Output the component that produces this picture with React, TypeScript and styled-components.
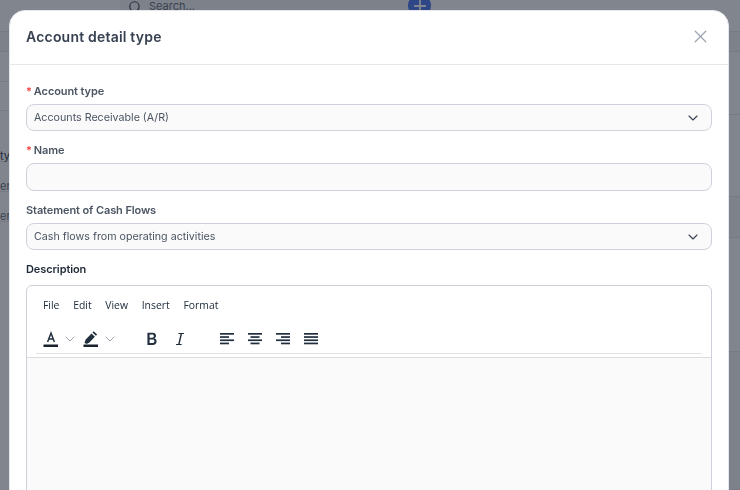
import React from 'react';
import styled, { createGlobalStyle } from 'styled-components';
import { ChevronDown, Plus, Search, X } from 'lucide-react';

const GlobalStyle = createGlobalStyle`
  html, body {
    margin: 0;
    padding: 0;
    width: 740px;
    height: 490px;
    overflow: hidden;
    font-family: Inter, 'Liberation Sans', sans-serif;
  }
`;

export default function App() {
  return (
    <>
      <GlobalStyle />
      <Page>
        <TopBar>
          <SearchBox>
            <Search size={14} color="#3f4652" />
            <span>Search...</span>
          </SearchBox>
          <AddButton>
            <Plus size={18} color="#fff" strokeWidth={2.5} />
          </AddButton>
        </TopBar>
        <Columns>
          <Column>
            <Row h={20} shade />
            <Row h={30} />
            <Row h={29} />
            <Row h={51}>ty</Row>
            <Row h={30} light>
              en
            </Row>
            <Row h={30} light>
              er
            </Row>
          </Column>
          <Column>
            <Row h={20} shade />
            <Row h={63} />
            <Row h={82} />
            <Row h={41} shade />
            <Row h={114} />
            <Row h={138} shade />
          </Column>
        </Columns>
      </Page>
      <Overlay />
      <Modal>
        <Header>
          <Title>Account detail type</Title>
          <Close>
            <X size={21} strokeWidth={1.5} />
          </Close>
        </Header>
        <Body>
          <Field>
            <Label>
              <Star>*</Star>Account type
            </Label>
            <SelectBox>
              Accounts Receivable (A/R)
              <ChevronDown size={16} strokeWidth={1.6} color="#374151" />
            </SelectBox>
          </Field>
          <Field>
            <Label>
              <Star>*</Star>Name
            </Label>
            <InputBox />
          </Field>
          <Field>
            <Label>Statement of Cash Flows</Label>
            <SelectBox>
              Cash flows from operating activities
              <ChevronDown size={16} strokeWidth={1.6} color="#374151" />
            </SelectBox>
          </Field>
          <Field>
            <Label dark>Description</Label>
            <Editor>
              <EditorHead>
                <MenuBar>
                  <MenuItem>File</MenuItem>
                  <MenuItem>Edit</MenuItem>
                  <MenuItem>View</MenuItem>
                  <MenuItem>Insert</MenuItem>
                  <MenuItem>Format</MenuItem>
                </MenuBar>
                <ToolBar>
                  <ToolGroup>
                    <ToolButton>
                      <svg width="16" height="18" viewBox="0 0 16 18">
                        <path d="M4.600 12 8 3l3.400 9M5.800 9h4.400" fill="none" stroke="#222f3e" strokeWidth="1.500" />
                        <rect x="0.500" y="14.500" width="14.500" height="2.500" fill="#18202b" />
                      </svg>
                    </ToolButton>
                    <Caret />
                    <ToolButton>
                      <svg width="16" height="18" viewBox="0 0 16 18">
                        <path d="M1.500 13l1-3.200 6-6.300 3.400 3.200-6 6.300-1.200.2-.6.700-2.600-.9zM9.500 2.500l1.200-1.200 3.400 3.200-1.200 1.200z" fill="#222f3e" />
                        <rect x="0.500" y="14.500" width="14.500" height="2.500" fill="#18202b" />
                      </svg>
                    </ToolButton>
                    <Caret />
                  </ToolGroup>
                  <ToolGroup gap={13} offset={21}>
                    <ToolButton>
                      <svg width="16" height="16" viewBox="0 0 14 14">
                        <path d="M3 1.500h4.600c1.700 0 2.900 1 2.900 2.600 0 1.100-.6 1.900-1.600 2.300 1.300.3 2.100 1.300 2.100 2.700 0 1.900-1.400 3.100-3.300 3.100H3zM4.900 3.100v2.700h2.300c.9 0 1.400-.5 1.400-1.350S8.100 3.100 7.200 3.100zm0 4.300v3.200h2.600c1 0 1.600-.6 1.600-1.600s-.6-1.600-1.600-1.600z" fill="#222f3e" />
                      </svg>
                    </ToolButton>
                    <ToolButton>
                      <svg width="14" height="14" viewBox="0 0 14 14">
                        <path d="M5.500 1h5.500v1H9L6.700 12h2v1H3v-1h2.200L7.500 2H5.300z" fill="#222f3e" />
                      </svg>
                    </ToolButton>
                  </ToolGroup>
                  <ToolGroup gap={14} offset={33}>
                    <AlignIcon lines={[[0, 14], [0, 9], [0, 14], [0, 9]]} />
                    <AlignIcon lines={[[0, 14], [2.500, 9], [0, 14], [2.500, 9]]} />
                    <AlignIcon lines={[[0, 14], [5, 9], [0, 14], [5, 9]]} />
                    <AlignIcon lines={[[0, 14], [0, 14], [0, 14], [0, 14]]} />
                  </ToolGroup>
                </ToolBar>
              </EditorHead>
              <EditArea />
            </Editor>
          </Field>
        </Body>
      </Modal>
    </>
  );
}

function AlignIcon({ lines }: { lines: number[][] }) {
  return (
    <ToolButton>
      <svg width="14" height="14" viewBox="0 0 14 14">
        {lines.map(([x, w], i) => (
          <rect key={i} x={x} y={1 + i * 3.200} width={w} height="1.700" fill="#222f3e" />
        ))}
      </svg>
    </ToolButton>
  );
}

function Caret() {
  return (
    <CaretWrap>
      <ChevronDown size={16} strokeWidth={1.300} color="#8d94a0" />
    </CaretWrap>
  );
}

const Page = styled.div`
  width: 740px;
  height: 490px;
  background: #fff;
  overflow: hidden;
`;

const TopBar = styled.div`
  height: 32px;
  display: flex;
  border-bottom: 1px solid #e5e7eb;
  box-sizing: border-box;
`;

const SearchBox = styled.div`
  width: 288px;
  height: 13px;
  margin-left: 120px;
  padding-left: 8px;
  box-sizing: border-box;
  background: #f6f6f8;
  display: flex;
  align-items: flex-end;
  gap: 7px;
  color: #6b7280;
  font-size: 11px;
  svg {
    margin-bottom: -1px;
  }
`;

const AddButton = styled.div`
  width: 23px;
  height: 23px;
  margin-top: -6px;
  border-radius: 50%;
  background: #4f7cf0;
  display: flex;
  align-items: center;
  justify-content: center;
`;

const Columns = styled.div`
  display: flex;
  justify-content: space-between;
`;

const Column = styled.div`
  width: 40px;
  display: flex;
  flex-direction: column;
`;

const Row = styled.div<{ h: number; shade?: boolean; light?: boolean }>`
  height: ${(p) => p.h}px;
  box-sizing: border-box;
  border-bottom: 1px solid #e5e7eb;
  background: ${(p) => (p.shade ? '#f5f6f8' : '#fff')};
  display: flex;
  align-items: flex-end;
  font-size: 11px;
  line-height: 10px;
  color: ${(p) => (p.light ? '#6b7280' : '#374151')};
`;

const Overlay = styled.div`
  position: fixed;
  inset: 0;
  background: rgba(17, 24, 39, 0.53);
`;

const Modal = styled.div`
  position: fixed;
  left: 9px;
  top: 10px;
  width: 720px;
  height: 520px;
  box-sizing: border-box;
  background: #fff;
  border: 1px solid #e5e7eb;
  border-radius: 16px;
  overflow: hidden;
`;

const Header = styled.div`
  height: 54px;
  box-sizing: border-box;
  padding: 0 17px 2px 16px;
  border-bottom: 1px solid #e5e7eb;
  display: flex;
  align-items: center;
  justify-content: space-between;
`;

const Title = styled.div`
  font-size: 14px;
  font-weight: 600;
  color: #374151;
  letter-spacing: 0.2px;
`;

const Close = styled.div`
  display: flex;
  color: #9ca3af;
`;

const Body = styled.div`
  padding: 19px 16px 0;
  display: flex;
  flex-direction: column;
  gap: 12px;
`;

const Field = styled.div`
  display: flex;
  flex-direction: column;
  gap: 5px;
`;

const Label = styled.div<{ dark?: boolean }>`
  font-size: 11px;
  font-weight: 600;
  letter-spacing: -0.1px;
  line-height: 15px;
  color: ${(p) => (p.dark ? '#1f2937' : '#4b5563')};
`;

const Star = styled.span`
  color: #ef4444;
  margin-right: 2px;
`;

const SelectBox = styled.div`
  height: 27px;
  box-sizing: border-box;
  padding: 0 10px 0 7px;
  border: 1px solid #d1d0da;
  border-radius: 8px;
  background: #fafafa;
  display: flex;
  align-items: center;
  justify-content: space-between;
  font-size: 10.700px;
  color: #4b5563;
`;

const InputBox = styled.div`
  height: 28px;
  box-sizing: border-box;
  border: 1px solid #d1d0da;
  border-radius: 8px;
  background: #fafafa;
`;

const Editor = styled.div`
  height: 260px;
  margin-top: 3px;
  box-sizing: border-box;
  border: 1px solid #d1d0da;
  border-radius: 6px 6px 0 0;
  overflow: hidden;
  display: flex;
  flex-direction: column;
`;

const EditorHead = styled.div`
  height: 72px;
  box-sizing: border-box;
  padding: 0 9px;
  border-bottom: 1px solid #dcdcdc;
  flex: none;
`;

const MenuBar = styled.div`
  height: 38px;
  display: flex;
  align-items: center;
  gap: 13.700px;
  padding-left: 7px;
`;

const MenuItem = styled.span`
  font-family: 'Open Sans', 'Liberation Sans', sans-serif;
  font-size: 10.400px;
  color: #222f3e;
`;

const ToolBar = styled.div`
  height: 29px;
  display: flex;
  align-items: center;
  padding-left: 7px;
  border-bottom: 1px solid #e2e2e2;
`;

const ToolGroup = styled.div<{ gap?: number; offset?: number }>`
  display: flex;
  align-items: center;
  gap: ${(p) => p.gap ?? 0}px;
  margin-left: ${(p) => p.offset ?? 0}px;
`;

const ToolButton = styled.div`
  display: flex;
  align-items: center;
`;

const CaretWrap = styled.div`
  display: flex;
  margin: 0 5px 0 3px;
`;

const EditArea = styled.div`
  flex: 1;
  background: #fafafa;
`;
